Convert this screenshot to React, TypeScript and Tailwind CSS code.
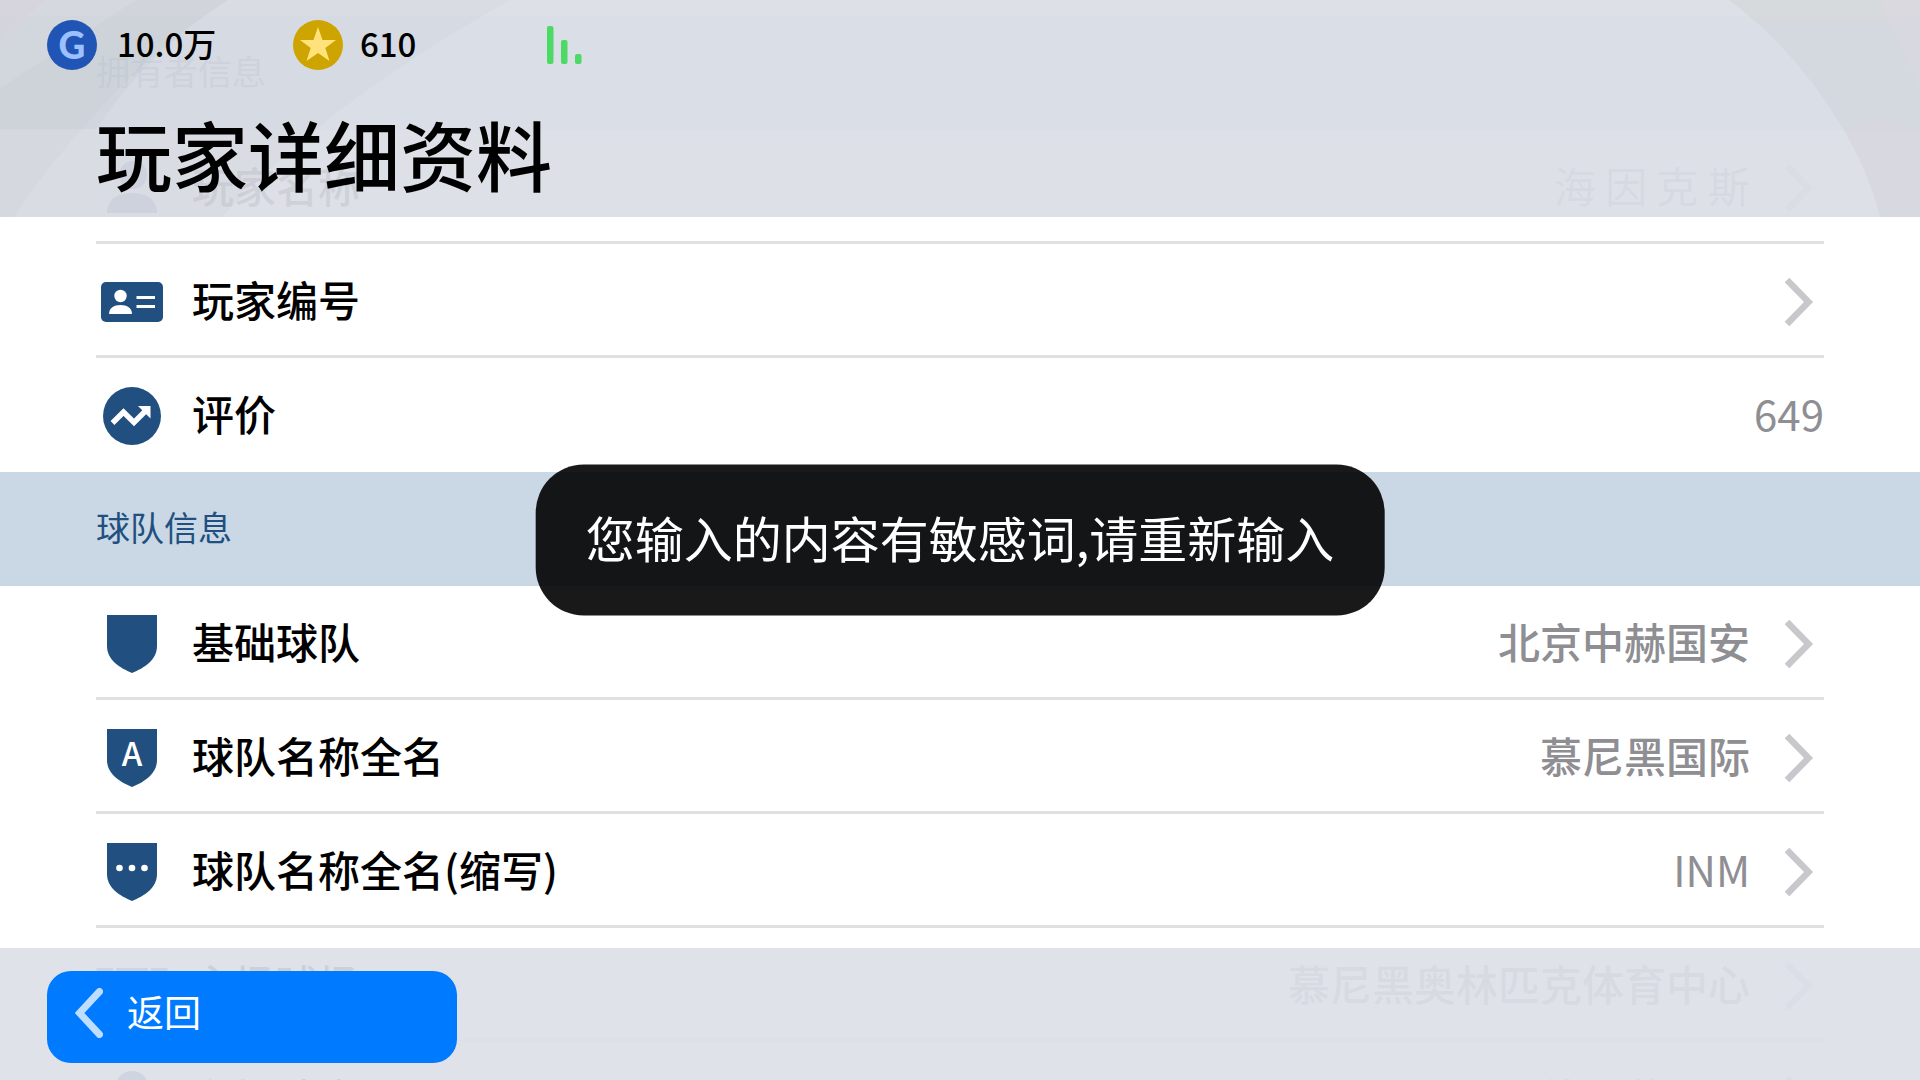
import type { ReactNode } from 'react';

function ChevronRight() {
  return (
    <svg className="h-[50px] w-[30px] shrink-0" viewBox="0 0 30 50" fill="none" aria-hidden="true">
      <path d="M3 3 L24.5 25 L3 47" stroke="#c7c7cc" strokeWidth="6.5" />
    </svg>
  );
}

function PersonIcon() {
  return (
    <svg className="h-[58px] w-[52px]" viewBox="0 0 52 58" fill="#215080" aria-hidden="true">
      <circle cx="27" cy="16" r="14" />
      <path d="M1 54 C1 40 12 34 26 34 C40 34 51 40 51 54 Z" />
    </svg>
  );
}

function IdCardIcon() {
  return (
    <svg className="h-10 w-[62px]" viewBox="0 0 62 40" aria-hidden="true">
      <rect width="62" height="40" rx="5" fill="#215080" />
      <g fill="#fff">
        <circle cx="19.5" cy="14" r="6.2" />
        <path d="M8 32 C8 26 13 23 19.5 23 C26 23 31 26 31 32 Z" />
        <rect x="35.5" y="14" width="18.5" height="3" />
        <rect x="35.5" y="23" width="18.5" height="3" />
      </g>
    </svg>
  );
}

function TrendIcon() {
  return (
    <svg className="h-[58px] w-[58px]" viewBox="0 0 58 58" aria-hidden="true">
      <circle cx="29" cy="29" r="29" fill="#215080" />
      <path d="M9.5 36 L20.5 25 L31 35.5 L43 23.5" fill="none" stroke="#fff" strokeWidth="5.4" />
      <path d="M35 19 H47.5 V31.5 Z" fill="#fff" />
    </svg>
  );
}

function ShieldIcon({ children }: { children?: ReactNode }) {
  return (
    <svg className="h-[58px] w-[50px]" viewBox="0 0 50 58" aria-hidden="true">
      <path d="M0 0 H50 V31 C50 45 37 53 25 58 C13 53 0 45 0 31 Z" fill="#215080" />
      {children}
    </svg>
  );
}

function StadiumIcon() {
  return (
    <svg className="h-9 w-[72px]" viewBox="0 0 72 36" fill="#215080" aria-hidden="true">
      <path d="M0 0 H17 L18 36 H12 Z M20 0 H52 L48 36 H24 Z M55 0 H72 L60 36 H54 Z" />
    </svg>
  );
}

function KitIcon() {
  return (
    <svg className="h-[58px] w-9" viewBox="0 0 36 58" fill="#215080" aria-hidden="true">
      <circle cx="18" cy="17" r="17" />
      <path d="M0 58 C0 44 8 38 18 38 C28 38 36 44 36 58 Z" />
    </svg>
  );
}

type RowProps = {
  icon: ReactNode;
  label: string;
  value?: string;
  thin?: boolean;
  link?: boolean;
  last?: boolean;
};

function Row({ icon, label, value, thin = false, link = true, last = false }: RowProps) {
  const content = (
    <>
      <span className="flex w-[72px] shrink-0 justify-center">{icon}</span>
      <span className="ml-6 flex-1 pb-1.5 text-left text-black">{label}</span>
      {value && (
        <span className={`pb-1.5 text-[#8e8e93] ${thin ? 'font-normal' : 'font-medium'}`}>
          {value}
        </span>
      )}
      {link && (
        <span className="ml-[34px] mr-2.5 flex">
          <ChevronRight />
        </span>
      )}
    </>
  );
  const line = last ? 'border-b-[3px] border-transparent' : 'border-b-[3px] border-[#e0e0e1]';
  const inner = 'flex h-full w-full items-center pt-1 text-[42px] font-medium leading-none';

  return (
    <li className={`mx-24 h-[114px] ${line}`}>
      {link ? (
        <button type="button" className={inner}>
          {content}
        </button>
      ) : (
        <div className={inner}>{content}</div>
      )}
    </li>
  );
}

function Section({ title, children }: { title: string; children: ReactNode }) {
  return (
    <section>
      <h2 className="flex h-[114px] items-center bg-[#cad8e5] px-24 pb-1 text-[34px] leading-none text-[#215080]">
        {title}
      </h2>
      <ul>{children}</ul>
    </section>
  );
}

function HeaderPattern() {
  return (
    <svg
      className="absolute inset-0 h-full w-full"
      viewBox="0 0 1920 217"
      preserveAspectRatio="none"
      aria-hidden="true"
    >
      <path d="M0 0 H510 Q420 50 340 110 Q270 165 222 217 H0 Z" fill="#a8b0ba" fillOpacity=".07" />
      <path d="M0 0 H228 Q150 50 90 120 Q45 170 14 217 H0 Z" fill="#a0a4a8" fillOpacity=".06" />
      <path d="M0 88 L136 0 H228 Q150 50 96 129 H0 Z" fill="#a0a4a8" fillOpacity=".07" />
      <path d="M0 0 H45 L0 42 Z" fill="#d8cfdc" fillOpacity=".4" />
      <path d="M1729 0 Q1796 50 1842 127 Q1868 170 1880 217 H1920 V0 Z" fill="#b8bcc0" fillOpacity=".17" />
      <path d="M1729 0 H1920 V20 H1756 Z" fill="#dad9d8" fillOpacity=".45" />
      <path d="M1880 0 L1920 90 V0 Z" fill="#dcd8e2" fillOpacity=".5" />
      <path d="M1844 130 L1880 116 L1920 130 V217 H1893 Z" fill="#dad7df" fillOpacity=".5" />
    </svg>
  );
}

function Header() {
  return (
    <header className="absolute inset-x-0 top-0 bg-[#dbdee6]/94 pb-[17px]">
      <HeaderPattern />
      <div className="relative flex h-[90px] items-center pl-[47px] text-[33px] font-medium leading-none text-black">
        <div className="flex w-[246px] items-center gap-5">
          <svg className="h-[50px] w-[50px]" viewBox="0 0 50 50" aria-hidden="true">
            <circle cx="25" cy="25" r="25" fill="#2055b5" />
            <text
              x="25"
              y="38.5"
              textAnchor="middle"
              className="font-['Lato',sans-serif] text-[37px] font-black"
              fill="#9cc0ff"
            >
              G
            </text>
          </svg>
          <span className="pb-1">10.0万</span>
        </div>
        <div className="flex w-[254px] items-center gap-[17px]">
          <svg className="h-[50px] w-[50px]" viewBox="0 0 50 50" aria-hidden="true">
            <circle cx="25" cy="25" r="25" fill="#cda400" />
            <path
              d="M25 7 L29.5 20 H43 L32.3 28 L36.5 41 L25 33 L13.5 41 L17.7 28 L7 20 H20.5 Z"
              fill="#ffe37a"
            />
          </svg>
          <span className="pb-1">610</span>
        </div>
        <svg className="h-[38px] w-[35px]" viewBox="0 0 35 38" fill="#4cd964" aria-hidden="true">
          <rect width="6.5" height="38" rx="2" />
          <rect x="14" y="14" width="6.5" height="24" rx="2" />
          <rect x="28" y="28" width="6.5" height="10" rx="2" />
        </svg>
      </div>
      <h1 className="relative mt-4 px-24 text-[76px] font-medium leading-[94px] text-black">
        玩家详细资料
      </h1>
    </header>
  );
}

function Footer() {
  return (
    <footer className="absolute inset-x-0 bottom-0 bg-[#dde0e7]/93 px-[47px] pb-[17px] pt-[23px]">
      <button
        type="button"
        className="flex h-[92px] w-[410px] items-center gap-6 rounded-3xl bg-[#007aff] pb-2 pl-7 text-[37px] leading-none text-white"
      >
        <svg className="h-[50px] w-7" viewBox="0 0 28 50" fill="none" aria-hidden="true">
          <path
            d="M24.5 3.5 L4.5 25 L24.5 46.5"
            stroke="#bfdeff"
            strokeWidth="7"
            strokeLinecap="round"
          />
        </svg>
        <span className="pb-1">返回</span>
      </button>
    </footer>
  );
}

export default function App() {
  return (
    <div className="relative h-screen overflow-hidden bg-white font-['Noto_Sans_CJK_SC',sans-serif]">
      <main className="pt-4">
        <Section title="拥有者信息">
          <Row icon={<PersonIcon />} label="玩家名称" value="海 因 克 斯" thin />
          <Row icon={<IdCardIcon />} label="玩家编号" />
          <Row icon={<TrendIcon />} label="评价" value="649" thin link={false} last />
        </Section>
        <Section title="球队信息">
          <Row icon={<ShieldIcon />} label="基础球队" value="北京中赫国安" />
          <Row
            icon={
              <ShieldIcon>
                <text
                  x="25"
                  y="37"
                  textAnchor="middle"
                  className="font-['Noto_Sans_CJK_SC',sans-serif] text-[33px] font-medium"
                  fill="#fff"
                >
                  A
                </text>
              </ShieldIcon>
            }
            label="球队名称全名"
            value="慕尼黑国际"
          />
          <Row
            icon={
              <ShieldIcon>
                <g fill="#fff">
                  <circle cx="12.5" cy="25" r="3.3" />
                  <circle cx="25" cy="25" r="3.3" />
                  <circle cx="37.5" cy="25" r="3.3" />
                </g>
              </ShieldIcon>
            }
            label="球队名称全名(缩写)"
            value="INM"
            thin
          />
          <Row icon={<StadiumIcon />} label="主场球场" value="慕尼黑奥林匹克体育中心" />
          <Row icon={<KitIcon />} label="主场球衣" value="德国慕尼黑" />
        </Section>
      </main>

      <Header />
      <Footer />

      <div
        role="alert"
        className="absolute left-1/2 top-1/2 -translate-x-1/2 -translate-y-1/2 whitespace-nowrap rounded-[48px] bg-black/90 px-[50px] pb-[55px] pt-[47px] text-[49px] leading-[49px] text-white"
      >
        您输入的内容有敏感词,请重新输入
      </div>
    </div>
  );
}
